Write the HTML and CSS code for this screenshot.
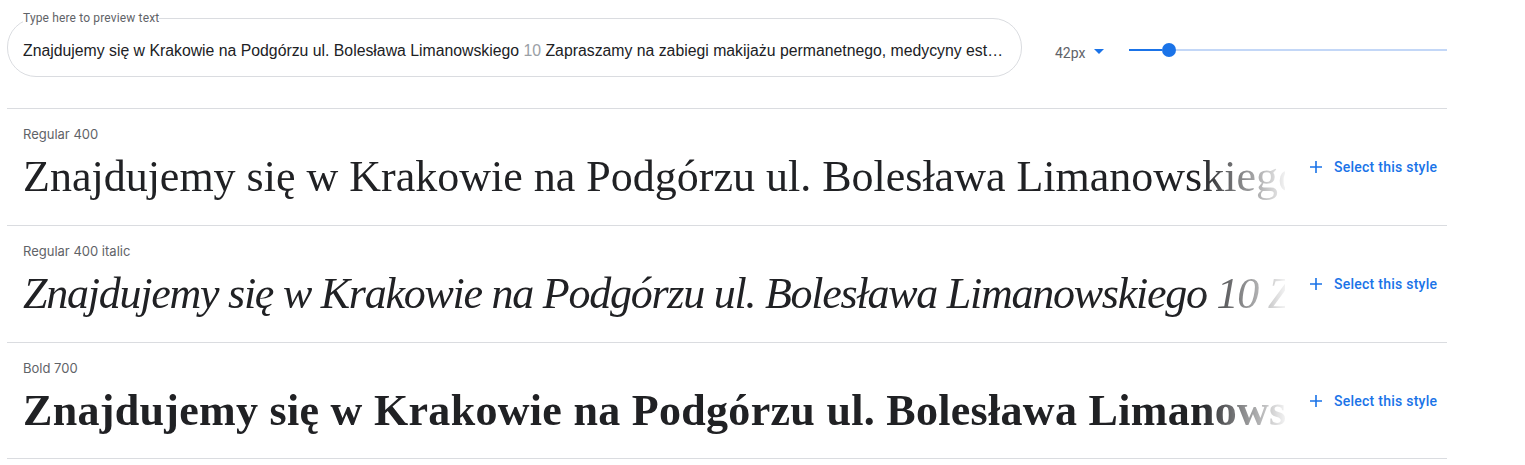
FILE: index.html
```html
<!DOCTYPE html>
<html lang="pl">
<head>
<meta charset="utf-8">
<title>Font styles preview</title>
<link rel="stylesheet" href="styles.css">
</head>
<body>
<div class="page">
  <div class="toolbar">
    <fieldset class="preview-field">
      <legend>Type here to preview text</legend>
      <div class="preview-input">Znajdujemy się w Krakowie na Podgórzu ul. Bolesława Limanowskiego <span class="num">10</span> Zapraszamy na zabiegi makijażu permanetnego, medycyny estetycznej oraz kosmetologii</div>
    </fieldset>
    <div class="size-select">
      <span class="size-value">42px</span>
      <svg class="size-caret" width="10" height="5" viewBox="0 0 10 5"><path d="M0 0h10L5 5z" fill="#1a73e8"/></svg>
    </div>
    <div class="slider">
      <div class="slider-fill"></div>
      <div class="slider-thumb"></div>
      <div class="slider-rest"></div>
    </div>
  </div>

  <ul class="styles">
    <li class="style-row">
      <div class="style-main">
        <div class="style-label">Regular 400</div>
        <div class="style-sample sample-regular">Znajdujemy się w Krakowie na Podgórzu ul. Bolesława Limanowskiego 10 Zapraszamy na zabiegi makijażu</div>
      </div>
      <button class="select-btn" type="button">
        <svg class="plus" width="12" height="12" viewBox="0 0 12 12"><path d="M6 0v12M0 6h12" stroke="#1a73e8" stroke-width="1.6"/></svg>
        <span>Select this style</span>
      </button>
    </li>
    <li class="style-row">
      <div class="style-main">
        <div class="style-label">Regular 400 italic</div>
        <div class="style-sample sample-italic">Znajdujemy się w Krakowie na Podgórzu ul. Bolesława Limanowskiego 10 Zapraszamy na zabiegi makijażu</div>
      </div>
      <button class="select-btn" type="button">
        <svg class="plus" width="12" height="12" viewBox="0 0 12 12"><path d="M6 0v12M0 6h12" stroke="#1a73e8" stroke-width="1.6"/></svg>
        <span>Select this style</span>
      </button>
    </li>
    <li class="style-row">
      <div class="style-main">
        <div class="style-label">Bold 700</div>
        <div class="style-sample sample-bold">Znajdujemy się w Krakowie na Podgórzu ul. Bolesława Limanowskiego 10 Zapraszamy na zabiegi makijażu</div>
      </div>
      <button class="select-btn" type="button">
        <svg class="plus" width="12" height="12" viewBox="0 0 12 12"><path d="M6 0v12M0 6h12" stroke="#1a73e8" stroke-width="1.6"/></svg>
        <span>Select this style</span>
      </button>
    </li>
  </ul>
</div>
</body>
</html>
```

FILE: styles.css
```css
* { box-sizing: border-box; }

body {
  margin: 0;
  background: #fff;
  font-family: Roboto, "Liberation Sans", sans-serif;
}

.page {
  margin-left: 7px;
  width: 1440px;
}

/* ---------- toolbar ---------- */
.toolbar {
  display: flex;
  align-items: flex-start;
  height: 108px;
  padding-top: 12px;
}

.preview-field {
  flex: 0 0 1015px;
  margin: 0;
  padding: 0 15px;
  border: 1px solid #dadce0;
  border-radius: 29px;
  min-width: 0;
}

.preview-field legend {
  padding: 0;
  font: 12px/12px Roboto, "Liberation Sans", sans-serif;
  letter-spacing: 0.15px;
  color: #5f6368;
}

.preview-input {
  height: 52px;
  padding-top: 17px;
  font: 15.8px/20px "Liberation Sans", Arial, sans-serif;
  color: #202124;
  white-space: nowrap;
  overflow: hidden;
  text-overflow: ellipsis;
}

.preview-input .num { color: #9aa0a6; }

.size-select {
  flex: 0 0 49px;
  margin-left: 33px;
  margin-top: 31px;
  display: flex;
  align-items: center;
  justify-content: space-between;
  height: 20px;
}

.size-value {
  font: 14px/20px Roboto, sans-serif;
  color: #5f6368;
}

.size-caret { margin-top: -3px; }

.slider {
  flex: 1;
  margin-left: 25px;
  margin-top: 31px;
  height: 14px;
  display: flex;
  align-items: center;
}

.slider-fill {
  width: 33px;
  height: 2px;
  background: #1a73e8;
}

.slider-thumb {
  width: 14px;
  height: 14px;
  border-radius: 50%;
  background: #1a73e8;
}

.slider-rest {
  flex: 1;
  height: 2px;
  background: #c3d7f7;
}

/* ---------- style rows ---------- */
.styles {
  list-style: none;
  margin: 0;
  padding: 0;
}

.style-row {
  display: flex;
  align-items: flex-start;
  height: 117px;
  border-top: 1px solid #dadce0;
  padding-left: 16px;
}

.style-row:last-child {
  height: 117px;
  border-bottom: 1px solid #dadce0;
}

.style-main {
  flex: 0 0 1262px;
  min-width: 0;
}

.style-label {
  padding-top: 15px;
  font: 13px/20px Inter, Roboto, sans-serif;
  color: #5f6368;
}

.style-sample {
  margin-top: 5px;
  font-family: "Liberation Serif", "Times New Roman", serif;
  font-size: 44px;
  line-height: 56px;
  color: #202124;
  white-space: nowrap;
  overflow: hidden;
  -webkit-mask-image: linear-gradient(to right, #000 calc(100% - 85px), rgba(0,0,0,0.06));
  mask-image: linear-gradient(to right, #000 calc(100% - 85px), rgba(0,0,0,0.06));
}

.sample-italic {
  font-style: italic;
  letter-spacing: -1.25px;
}

.sample-bold {
  font-weight: 700;
  letter-spacing: 0.3px;
}

.select-btn {
  margin-left: 25px;
  margin-top: 48px;
  padding: 0;
  border: 0;
  background: none;
  display: flex;
  align-items: center;
  gap: 12px;
  height: 20px;
  font: 500 14px/20px Roboto, sans-serif;
  letter-spacing: 0.25px;
  color: #1a73e8;
  cursor: pointer;
  white-space: nowrap;
}
```
